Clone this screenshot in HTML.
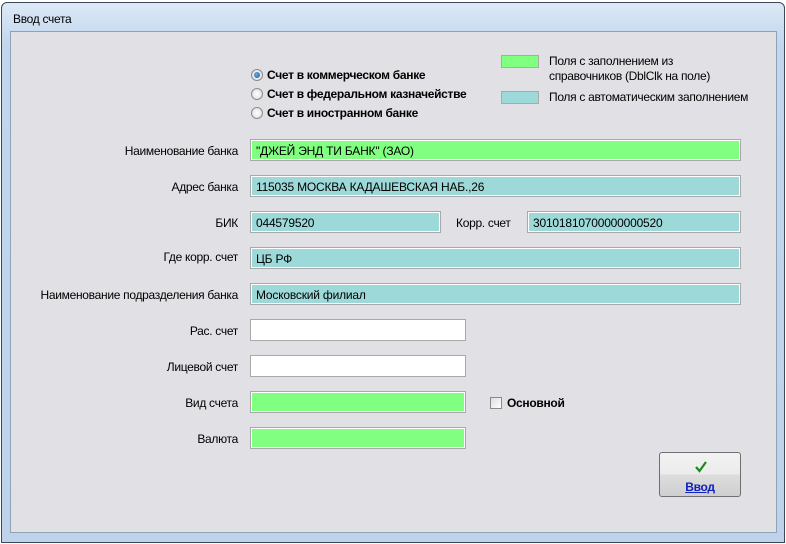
<!DOCTYPE html>
<html><head><meta charset="utf-8"><style>
*{margin:0;padding:0;box-sizing:border-box}
body{width:786px;height:544px;background:#fff;font-family:"Liberation Sans",sans-serif;font-size:12px;color:#000;position:relative;overflow:hidden}
.win{position:absolute;left:1px;top:2px;width:784px;height:541px;border:1px solid #3a4a5a;border-radius:6px 6px 0 0;background:linear-gradient(#dde9f6,#c2d7ee 40px,#bed3ea)}
.title{position:absolute;left:13px;top:12px;font-size:12px;color:#000;letter-spacing:-0.3px}
.client{position:absolute;left:10px;top:31px;width:767px;height:502px;background:#e1e0e4;border:1px solid #8ea2b8}
.a{position:absolute;white-space:nowrap;letter-spacing:-0.3px}
.lbl{position:absolute;right:548px;white-space:nowrap;text-align:right;letter-spacing:-0.3px}
.f{position:absolute;height:22px;border:1px solid #a9a9a9;box-shadow:inset 0 0 0 1px #fff;padding:4px 0 0 5px;white-space:nowrap;letter-spacing:-0.2px}
.g{background:#80ff80}.t{background:#9dd9d9}.w{background:#fff}
.rad{position:absolute;width:12px;height:12px;border-radius:50%;border:1px solid #8a8a8a;background:radial-gradient(#fff,#d8d8d8)}
.rad.on::after{content:"";position:absolute;left:2px;top:2px;width:6px;height:6px;border-radius:50%;background:radial-gradient(circle at 40% 40%,#6ab0e8,#1d4f8a)}
b{font-weight:bold}
</style></head><body>
<div class="win"></div>
<div class="title">Ввод счета</div>
<div class="client"></div>

<div class="rad on" style="left:251px;top:69px"></div>
<div class="a" style="left:267px;top:68px"><b>Счет в коммерческом банке</b></div>
<div class="rad" style="left:251px;top:88px"></div>
<div class="a" style="left:267px;top:87px"><b>Счет в федеральном казначействе</b></div>
<div class="rad" style="left:251px;top:107px"></div>
<div class="a" style="left:267px;top:106px"><b>Счет в иностранном банке</b></div>

<div class="a g" style="left:501px;top:55px;width:38px;height:13px;border:1px solid #aaa"></div>
<div class="a" style="left:549px;top:54px;">Поля с заполнением из</div>
<div class="a" style="left:549px;top:69px;">справочников (DblClk на поле)</div>
<div class="a t" style="left:501px;top:91px;width:38px;height:13px;border:1px solid #aaa"></div>
<div class="a" style="left:549px;top:90px;">Поля с автоматическим заполнением</div>

<div class="lbl" style="top:144px">Наименование банка</div>
<div class="f g" style="left:250px;top:139px;width:491px">"ДЖЕЙ ЭНД ТИ БАНК" (ЗАО)</div>
<div class="lbl" style="top:180px">Адрес банка</div>
<div class="f t" style="left:250px;top:175px;width:491px">115035 МОСКВА КАДАШЕВСКАЯ НАБ.,26</div>
<div class="lbl" style="top:216px">БИК</div>
<div class="f t" style="left:250px;top:211px;width:191px">044579520</div>
<div class="a" style="left:456px;top:216px">Корр. счет</div>
<div class="f t" style="left:527px;top:211px;width:214px">30101810700000000520</div>
<div class="lbl" style="top:250px">Где корр. счет</div>
<div class="f t" style="left:250px;top:247px;width:491px">ЦБ РФ</div>
<div class="lbl" style="top:288px">Наименование подразделения банка</div>
<div class="f t" style="left:250px;top:283px;width:491px">Московский филиал</div>
<div class="lbl" style="top:324px">Рас. счет</div>
<div class="f w" style="left:250px;top:319px;width:216px"></div>
<div class="lbl" style="top:360px">Лицевой счет</div>
<div class="f w" style="left:250px;top:355px;width:216px"></div>
<div class="lbl" style="top:396px">Вид счета</div>
<div class="f g" style="left:250px;top:391px;width:216px"></div>
<div class="a" style="left:490px;top:397px;width:12px;height:12px;border:1px solid #8a8a8a;background:linear-gradient(135deg,#ddd,#fff)"></div>
<div class="a" style="left:507px;top:396px"><b>Основной</b></div>
<div class="lbl" style="top:432px">Валюта</div>
<div class="f g" style="left:250px;top:427px;width:216px"></div>

<div class="a" style="left:659px;top:452px;width:82px;height:45px;border:1px solid #707070;border-radius:3px;background:linear-gradient(#f2f2f2 0,#ebebeb 50%,#dddddd 50%,#cfcfcf 100%)">
<svg style="position:absolute;left:35px;top:8px" width="12" height="12" viewBox="0 0 12 12"><path d="M1 6 L4.5 10 L11 1" stroke="#1a8a1a" stroke-width="2.2" fill="none"/></svg>
<div style="position:absolute;left:0;right:0;top:27px;text-align:center;color:#1020c0;text-decoration:underline"><b>Ввод</b></div>
</div>
</body></html>
